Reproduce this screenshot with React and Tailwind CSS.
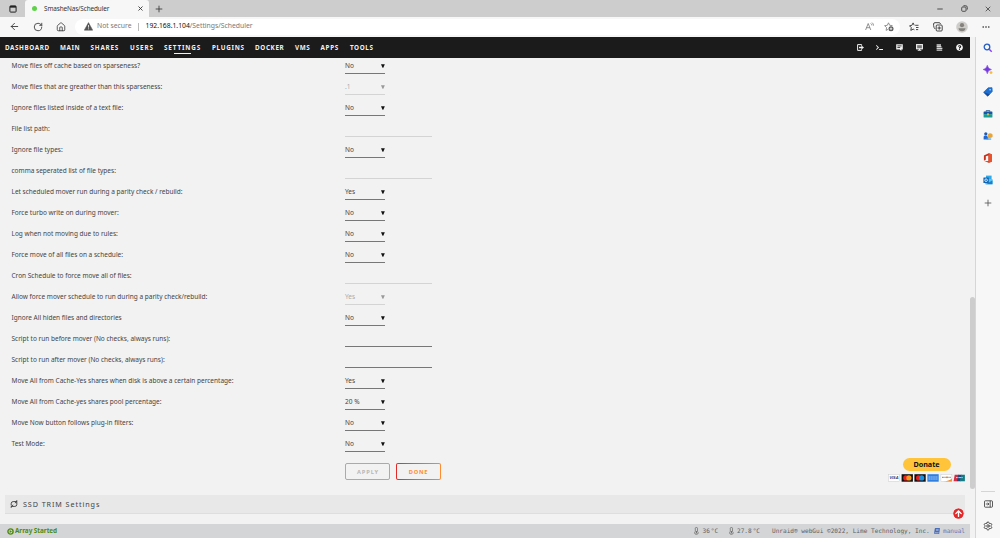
import { ArrowLeft, RotateCw, House, Plus, X, Minus, Settings } from "lucide-react";
import { FaTerminal, FaQuestionCircle, FaArrowCircleUp, FaBook, FaPlayCircle } from "react-icons/fa";

const NAV = [
  { label: "DASHBOARD", box: "w-[55px] tracking-[0.6px]" },
  { label: "MAIN", box: "w-[30.5px] tracking-[0.55px]" },
  { label: "SHARES", box: "w-[39.5px] tracking-[0.8px]" },
  { label: "USERS", box: "w-[34px] tracking-[0.9px]" },
  { label: "SETTINGS", box: "w-[48px] tracking-[0.9px]", active: true },
  { label: "PLUGINS", box: "w-[43px] tracking-[0.7px]" },
  { label: "DOCKER", box: "w-[40px] tracking-[0.65px]" },
  { label: "VMS", box: "w-[25.5px] tracking-[0.6px]" },
  { label: "APPS", box: "w-[29.5px] tracking-[0.7px]" },
  { label: "TOOLS", box: "w-[30px] tracking-[0.6px]" },
];

const FIELDS = [
  { label: "Move files off cache based on sparseness?", value: "No" },
  { label: "Move files that are greather than this sparseness:", value: ".1", disabled: true },
  { label: "Ignore files listed inside of a text file:", value: "No" },
  { label: "File list path:", input: true, disabled: true },
  { label: "Ignore file types:", value: "No" },
  { label: "comma seperated list of file types:", input: true, disabled: true },
  { label: "Let scheduled mover run during a parity check / rebuild:", value: "Yes" },
  { label: "Force turbo write on during mover:", value: "No" },
  { label: "Log when not moving due to rules:", value: "No" },
  { label: "Force move of all files on a schedule:", value: "No" },
  { label: "Cron Schedule to force move all of files:", input: true, disabled: true },
  { label: "Allow force mover schedule to run during a parity check/rebuild:", value: "Yes", disabled: true },
  { label: "Ignore All hiden files and directories", value: "No" },
  { label: "Script to run before mover (No checks, always runs):", input: true },
  { label: "Script to run after mover (No checks, always runs):", input: true },
  { label: "Move All from Cache-Yes shares when disk is above a certain percentage:", value: "Yes" },
  { label: "Move All from Cache-yes shares pool percentage:", value: "20 %" },
  { label: "Move Now button follows plug-in filters:", value: "No" },
  { label: "Test Mode:", value: "No" },
];

function TabBar() {
  return (
    <div className="flex h-[17px] shrink-0 items-stretch bg-[#cdcdcd] text-[#333]">
      <div className="flex w-[25px] items-center justify-center">
        <svg className="h-[8px] w-[8px]" viewBox="0 0 8 8" fill="none" stroke="#222">
          <rect x="0.9" y="0.9" width="6.2" height="6.2" rx="0.8" strokeWidth="1" />
          <path d="M1 1.8h6" strokeWidth="1.7" />
        </svg>
      </div>
      <div className="flex w-[124px] items-center rounded-t-[3px] bg-[#f7f7f7] pl-[7px] pr-[5px]">
        <span className="h-[5px] w-[5px] rounded-full bg-[#5fd24a]" />
        <span className="ml-[7px] whitespace-nowrap text-[6.4px] tracking-[-0.12px]">SmasheNas/Scheduler</span>
        <X className="ml-auto h-[7px] w-[7px]" strokeWidth={3} />
      </div>
      <div className="flex w-[19px] items-center justify-center">
        <Plus className="h-[10px] w-[10px]" strokeWidth={2} />
      </div>
      <div className="ml-auto flex items-center">
        <span className="flex w-[24px] justify-center"><Minus className="h-[8px] w-[8px]" strokeWidth={2.5} /></span>
        <span className="flex w-[24px] justify-center">
          <svg className="h-[7px] w-[7px]" viewBox="0 0 7 7" fill="none" stroke="#333" strokeWidth="0.8">
            <rect x="0.7" y="2" width="4.3" height="4.3" rx="0.9" />
            <path d="M2.2 1.2Q2.4.7 3 .7h1.6q1.7 0 1.7 1.7V4q0 .6-.5.8" />
          </svg>
        </span>
        <span className="flex w-[24px] justify-center"><X className="h-[8px] w-[8px]" strokeWidth={2.2} /></span>
      </div>
    </div>
  );
}

function Toolbar() {
  return (
    <div className="flex h-[20px] shrink-0 items-center bg-[#f7f7f7] pb-px text-[#333]">
      <div className="flex w-[75px] items-center pl-[3px]">
        <span className="flex w-[23px] justify-center"><ArrowLeft className="h-[11px] w-[11px]" strokeWidth={1.9} /></span>
        <span className="flex w-[23px] justify-center"><RotateCw className="h-[10px] w-[10px]" strokeWidth={2} /></span>
        <span className="flex w-[23px] justify-center"><House className="h-[10px] w-[10px]" strokeWidth={1.9} /></span>
      </div>
      <div className="flex h-[16px] w-[825px] items-center rounded-full bg-white pl-[9px] pr-[6px] text-[6.8px]">
        <svg className="h-[9px] w-[9px]" viewBox="0 0 9 9">
          <path d="M4.5.6 8.7 8.2H.3z" fill="#555" stroke="#555" strokeWidth=".5" strokeLinejoin="round" />
          <path d="M4.5 3v2.6M4.5 6.4v.9" stroke="#fff" strokeWidth=".8" />
        </svg>
        <span className="ml-[4px] w-[35px] whitespace-nowrap text-[#777]">Not secure</span>
        <span className="ml-[6px] h-[8px] w-px bg-[#bbb]" />
        <span className="ml-[6.5px] whitespace-nowrap text-[#777]"><span className="text-[#111]">192.168.1.104</span>/Settings/Scheduler</span>
        <div className="ml-auto flex items-center gap-[10px] text-[#777]">
          <svg className="h-[9px] w-[9px]" viewBox="0 0 9 9" fill="none" stroke="currentColor" strokeWidth=".8">
            <path d="M.6 8 3.2 1.5 5.8 8M1.5 5.7h3.4M5.7 1.4q1.1.7 1.1 2M7 .6q1.5 1 1.5 3" />
          </svg>
          <svg className="h-[10px] w-[10px]" viewBox="0 0 10 10" fill="none" stroke="currentColor" strokeWidth=".8">
            <path d="M4.5.8 5.7 3.3l2.8.3M4.5.8 3.3 3.3.6 3.7l2 1.9-.5 2.8L4 7.4" strokeLinejoin="round" />
            <circle cx="7" cy="6.8" r="2.5" fill="#555" stroke="none" />
            <path d="M7 5.4v2.8M5.6 6.8h2.8" stroke="#fff" />
          </svg>
        </div>
      </div>
      <div className="flex flex-1 items-center text-[#333]">
        <span className="flex w-[28px] justify-center">
          <svg className="h-[10px] w-[10px]" viewBox="0 0 10 10" fill="none" stroke="currentColor" strokeWidth=".9" strokeLinejoin="round">
            <path d="M6.2 3.3H9.5M7 5.5h2.5M7 7.6h2.2M5.2 3.3 4.1.9 2.9 3.3.5 3.8l1.8 1.8-.5 2.8 2.4-1.3 1.2.7" />
          </svg>
        </span>
        <span className="flex w-[20px] justify-center">
          <svg className="h-[10px] w-[10px]" viewBox="0 0 10 10" fill="none" stroke="currentColor" strokeWidth=".9">
            <rect x="3.2" y="3" width="6" height="6" rx="1" />
            <path d="M6.2 4.3v3.4M4.5 6h3.4M2.2 7Q.6 5.5.6 3.5V2Q.6.7 2 .7h4q1.2 0 1.6 1.2" />
          </svg>
        </span>
        <span className="flex w-[27px] justify-center">
          <svg className="h-[12px] w-[12px]" viewBox="0 0 12 12">
            <circle cx="6" cy="6" r="5.8" fill="#cfcdc9" />
            <circle cx="6" cy="4.2" r="2.1" fill="#85827e" />
            <path d="M2.5 7.2h7Q9.2 10.2 6 10.2T2.5 7.2" fill="#85827e" />
          </svg>
        </span>
        <span className="flex w-[21px] justify-center">
          <svg className="h-[2px] w-[8px]" viewBox="0 0 8 2" fill="#222">
            <circle cx="1.2" cy="1" r=".8" />
            <circle cx="4" cy="1" r=".8" />
            <circle cx="6.8" cy="1" r=".8" />
          </svg>
        </span>
      </div>
    </div>
  );
}

function NavBar() {
  return (
    <div className="flex h-[21px] shrink-0 items-center bg-[#1c1b1b] pl-[5px] text-[#f2f2f2]">
      {NAV.map((item) => (
        <div key={item.label} className={`${item.box} flex h-full shrink-0 flex-col items-start pt-[5px]`}>
          <span className="flex flex-col items-center whitespace-nowrap text-[6.3px] font-bold leading-[11px]">
            {item.label}
            {item.active && <span className="mr-px h-px w-[17px] bg-[#f2f2f2]" />}
          </span>
        </div>
      ))}
      <div className="ml-auto flex items-center pr-[1px] text-[7px] text-[#f2f2f2]">
        <span className="flex w-[19.8px] justify-center">
          <svg className="h-[7px] w-[7px]" viewBox="0 0 7 7">
            <path d="M4.6 1.7V.6H.6v5.8h4V5.3" fill="none" stroke="#f2f2f2" strokeWidth="1" />
            <path d="M2 2.8h2.4V1.5L7 3.5 4.4 5.5V4.2H2z" fill="#f2f2f2" />
          </svg>
        </span>
        <span className="flex w-[19.8px] justify-center"><FaTerminal /></span>
        <span className="flex w-[19.8px] justify-center">
          <svg className="h-[7px] w-[7px]" viewBox="0 0 7 7">
            <path d="M.2.2h6.6v5.2H5.4V6.9L3.7 5.4H.2z" fill="#f2f2f2" />
            <path d="M1.4 1.9h4.2M1.4 3.5h2.8" stroke="#1c1b1b" strokeWidth=".8" />
          </svg>
        </span>
        <span className="flex w-[19.8px] justify-center">
          <svg className="h-[7px] w-[7px]" viewBox="0 0 7 7">
            <rect x=".6" y=".6" width="5.8" height="4.2" fill="#777" stroke="#f2f2f2" strokeWidth="1.1" />
            <path d="M3.5 4.7v1.4M1.7 6.3h3.6" stroke="#f2f2f2" strokeWidth="1.1" />
          </svg>
        </span>
        <span className="flex w-[19.8px] justify-center">
          <svg className="h-[7px] w-[7px]" viewBox="0 0 7 7" stroke="#d6d6d6">
            <path d="M.6 1h4.4M.6 2.7h4.8M.6 4.4h5.8M.6 6.1h5.6" strokeWidth="1.3" />
          </svg>
        </span>
        <span className="flex w-[19.8px] justify-center"><FaQuestionCircle /></span>
      </div>
    </div>
  );
}

function Field({ field }) {
  const width = field.input ? "w-[87px]" : "w-[40px]";
  const line = field.disabled ? "border-[#d4d4d4] text-[#aaa]" : "border-[#777] text-[#444]";
  return (
    <div className="flex h-[21px] items-start">
      <label className="w-[334px] shrink-0 whitespace-nowrap pl-[0.5px] leading-[15px]">{field.label}</label>
      <div className={`${width} ${line} flex h-[16px] items-center justify-between border-b leading-[15px]`}>
        <span>{field.value}</span>
        {!field.input && (
          <svg className={`h-[4px] w-[4px] ${field.disabled ? "text-[#999]" : "text-[#111]"}`} viewBox="0 0 4 4">
            <path d="M0 .3h3.8L2.3 3.7h-.8z" fill="currentColor" />
          </svg>
        )}
      </div>
    </div>
  );
}

function Cards() {
  return (
    <svg className="h-[8px] w-[77px]" viewBox="0 0 77 8">
      <rect x=".4" y=".4" width="11" height="7" fill="#fff" stroke="#ccc" strokeWidth=".5" />
      <text x="1.4" y="5.4" fontSize="3.9" fontWeight="bold" fontStyle="italic" fill="#26337a" fontFamily="Liberation Sans, sans-serif">VISA</text>
      <rect x="13.6" y=".2" width="11.3" height="7.5" fill="#111" />
      <circle cx="17.8" cy="3.9" r="2.6" fill="#e8211d" />
      <circle cx="20.9" cy="3.9" r="2.6" fill="#f69b1d" />
      <rect x="26.4" y=".2" width="11.3" height="7.5" fill="#111" />
      <circle cx="30.6" cy="3.9" r="2.6" fill="#e8211d" />
      <circle cx="33.7" cy="3.9" r="2.6" fill="#1a91dc" />
      <rect x="39.4" y=".2" width="11.3" height="7.5" fill="#2f7fe0" />
      <path d="M40.5 3h9M40.5 5h9" stroke="#a9cdf7" strokeWidth="1" strokeDasharray="1.5 .4" />
      <rect x="52.9" y=".4" width="11" height="7" fill="#fff" stroke="#ccc" strokeWidth=".5" />
      <path d="M55 7.4Q61 7 63.9 4.4v3z" fill="#f28a2c" />
      <path d="M54 3.3h9" stroke="#777" strokeWidth="1" strokeDasharray="1 .3" />
      <circle cx="59" cy="3.3" r=".9" fill="#f28a2c" />
      <rect x="65.6" y=".2" width="11.3" height="7.5" fill="#eee" />
      <path d="M66.7.7h4l-1.4 6.5h-3.7z" fill="#d52d45" />
      <path d="M70.2.7h3.7l-1.4 6.5h-3.7z" fill="#20497e" />
      <path d="M73.4.7h3.5v6.5H72z" fill="#137b83" />
      <path d="M68 3.6h7" stroke="#fff" strokeWidth=".9" strokeDasharray="1 .4" />
    </svg>
  );
}

function Thermometer() {
  return (
    <svg className="h-[8px] w-[5px]" viewBox="0 0 5 8" fill="none" stroke="#666" strokeWidth=".7">
      <path d="M1.3 4.4V1.2Q1.3.5 2.4.5t1.1.7v3.2q.7.6.7 1.4 0 1.6-1.8 1.6T.6 5.8q0-.8.7-1.4z" />
      <path d="M2.4 4v2.4" strokeWidth="1" />
    </svg>
  );
}

function Footer() {
  return (
    <div className="flex h-[14px] shrink-0 items-center bg-[#d4d5d6] pl-[7px] pr-[5px] text-[#606164]">
      <svg className="h-[7px] w-[7px]" viewBox="0 0 7 7">
        <circle cx="3.5" cy="3.5" r="2.6" fill="none" stroke="#4f8a10" strokeWidth="1.4" />
        <path d="M2.6 1.9 5 3.5 2.6 5.1z" fill="#4f8a10" />
      </svg>
      <span className="ml-[1px] whitespace-nowrap text-[6.4px] font-bold tracking-[-0.05px] text-[#4f8a10]">Array Started</span>
      <div className="ml-auto flex items-center whitespace-nowrap font-['DejaVu_Sans_Mono',monospace] text-[6.1px]">
        <Thermometer />
        <span className="ml-[3px] w-[26.5px]">36<span className="ml-[1px]">°C</span></span>
        <Thermometer />
        <span className="ml-[3px] w-[35px]">27.8<span className="ml-[1px]">°C</span></span>
        <span className="w-[162px]">Unraid® webGui ©2022, Lime Technology, Inc.</span>
        <FaBook className="h-[6px] w-[6px] -skew-x-6 text-[#486dba]" />
        <span className="ml-[3px] text-[#6079b8]">manual</span>
      </div>
    </div>
  );
}

function Content() {
  return (
    <div className="relative flex min-h-0 flex-1 flex-col">
      <div className="pl-[11px] text-[6.5px] text-[#444]">
        {FIELDS.map((field) => (
          <Field key={field.label} field={field} />
        ))}
      </div>
      <div className="flex h-[38px] shrink-0 items-start pl-[345px] pr-[5px]">
        <button className="mt-[6px] h-[17px] w-[45px] rounded-[2px] border border-[#aaa] pl-px text-[5.7px] font-bold leading-[14px] tracking-[0.9px] text-[#b8b8b8]">APPLY</button>
        <div className="ml-[6px] mt-[6px] h-[17px] w-[45px] rounded-[2px] bg-linear-to-r from-[#e22828] to-[#ff8c2f] p-px">
          <button className="block h-full w-full rounded-[1px] bg-[#f2f2f2] text-[5.7px] font-bold leading-[14px] tracking-[0.7px] text-[#ff8c2f]">DONE</button>
        </div>
        <div className="ml-auto flex flex-col items-center pt-px">
          <button className="h-[13px] w-[48px] rounded-full bg-[#ffc439] text-[7.2px] font-bold leading-[13px] text-[#111]">Donate</button>
          <span className="mt-[3px] flex"><Cards /></span>
        </div>
      </div>
      <div className="mx-[5px] flex h-[19px] shrink-0 items-center border-b border-[#dedede] bg-[#e8e8e8] pl-[5px]">
        <svg className="h-[8px] w-[8px]" viewBox="0 0 8 8" fill="none" stroke="#333" strokeWidth=".9">
          <path d="M1.2 5.4V3.6Q1.2 1.6 3.2 1.6h3.6V.2M6.8 1.6v3Q6.8 6.4 4.8 6.4H1.2v1.4M1.2 6.4l2-1.5M6.8 1.6l-1.9 1.5" />
        </svg>
        <span className="ml-[5px] whitespace-nowrap text-[7.2px] tracking-[0.92px] text-[#444]">SSD TRIM Settings</span>
      </div>
      <FaArrowCircleUp className="absolute bottom-[5px] right-[6px] h-[11px] w-[11px] rounded-full bg-white text-[#e22828]" />
    </div>
  );
}

function Sidebar() {
  return (
    <div className="flex w-[24px] shrink-0 flex-col items-center bg-[#f7f7f7]">
      {/* Edge tools */}
      <div className="flex flex-col items-center gap-[12px] pt-[6px]">
        <svg className="h-[10px] w-[10px]" viewBox="0 0 10 10" fill="none">
          <circle cx="4" cy="4" r="2.8" stroke="#245bc5" strokeWidth="1.3" />
          <path d="m6.2 6.2 2.5 2.5" stroke="#8c43e6" strokeWidth="1.5" />
        </svg>
        <svg className="h-[10px] w-[10px]" viewBox="0 0 10 10">
          <path d="M4.3.3Q4.8 3.8 8.4 4.5 4.8 5 4.3 8.7 3.8 5 .2 4.5 3.8 3.8 4.3.3" fill="#763bdd" stroke="#763bdd" strokeWidth=".6" />
          <circle cx="8" cy="7.6" r="1.4" fill="#f6bd3b" />
        </svg>
        <svg className="h-[10px] w-[10px]" viewBox="0 0 10 10">
          <path d="M5.2.8 9 .7 9.2 4.6 4.7 9.2.6 5.3z" fill="#1f6fce" stroke="#1f6fce" strokeLinejoin="round" strokeWidth=".8" />
          <path d="m.6 5.3 4.1 3.9 2-2z" fill="#164a9c" />
          <circle cx="7.1" cy="2.8" r=".8" fill="#bfe2ff" />
        </svg>
        <svg className="h-[10px] w-[10px]" viewBox="0 0 10 10">
          <path d="M3.2 2.8V1.6h3.6v1.2" fill="none" stroke="#194d85" strokeWidth=".8" />
          <rect x=".6" y="2.6" width="8.8" height="3" rx=".5" fill="#1856a5" />
          <path d="M.6 5.3h8.8v2.8q0 .5-.5.5H1.1q-.5 0-.5-.5z" fill="#1b9c92" />
          <rect x="4.2" y="4.3" width="1.6" height="2" fill="#f5c948" />
        </svg>
        <svg className="h-[10px] w-[10px]" viewBox="0 0 10 10">
          <circle cx="2.8" cy="2.8" r="1.6" fill="#1c5cc0" />
          <path d="M.6 8.5V5.8Q.6 4.5 2.8 4.5T5.4 8.5z" fill="#2266cf" />
          <path d="M4.7 3.4Q7.2 1.2 9.6 3.6v2.2Q8 7.6 4.7 6.8z" fill="#e7a63b" />
          <path d="M3.4 7.4h4.8v1.3H3.4z" fill="#58a7e6" />
        </svg>
        <svg className="h-[10px] w-[10px]" viewBox="0 0 10 10">
          <path d="M.9 2.5 5.7.3l3.1 1v7.5L5.7 9.8.9 7.8l4.5.5V2.4L2.8 3.2v3.5L.9 7.6z" fill="#c9301a" />
          <path d="M5.7.3l3.1 1v7.5l-3.1 1z" fill="#e9532c" />
        </svg>
        <svg className="h-[10px] w-[10px]" viewBox="0 0 10 10">
          <path d="M3 .6h5.6v4H3z" fill="#30a9e8" />
          <path d="M2.2 4.2 9.5 4v5.2H2.2z" fill="#54c5f2" />
          <path d="m3 9.2 6.5-4v4z" fill="#1682cd" />
          <rect x=".4" y="2.5" width="5.4" height="5.4" rx=".5" fill="#1066b5" />
          <circle cx="3.1" cy="5.2" r="1.3" fill="none" stroke="#fff" strokeWidth=".8" />
        </svg>
      </div>
      <Plus className="mt-[13px] h-[10px] w-[10px] text-[#555]" strokeWidth={2} />
      <div className="mt-auto h-px w-[14px] bg-[#d5d5d5]" />
      <svg className="mt-[8px] h-[8px] w-[9px]" viewBox="0 0 9 8" fill="none" stroke="#333" strokeWidth=".8">
        <rect x=".5" y=".8" width="8" height="6.4" rx=".8" />
        <path d="M6.2.8v6.4M1.8 4h3M3.6 2.7 4.9 4 3.6 5.3" />
      </svg>
      <Settings className="mb-[7px] mt-[13px] h-[10px] w-[10px] text-[#333]" strokeWidth={2} />
    </div>
  );
}

export default function App() {
  return (
    <div className="flex h-[538px] w-[1000px] flex-col overflow-hidden bg-[#f2f2f2] font-['Noto_Sans',sans-serif]">
      <TabBar />
      <Toolbar />
      <div className="flex min-h-0 flex-1">
        <div className="flex w-[970px] shrink-0 flex-col">
          <NavBar />
          <Content />
          <Footer />
        </div>
        {/* Page scrollbar */}
        <div className="w-[6px] shrink-0 border-r border-[#d6d6d6] pt-[260px]">
          <div className="h-[192px] w-full rounded-full bg-[#cdcdcd]" />
        </div>
        <Sidebar />
      </div>
    </div>
  );
}
